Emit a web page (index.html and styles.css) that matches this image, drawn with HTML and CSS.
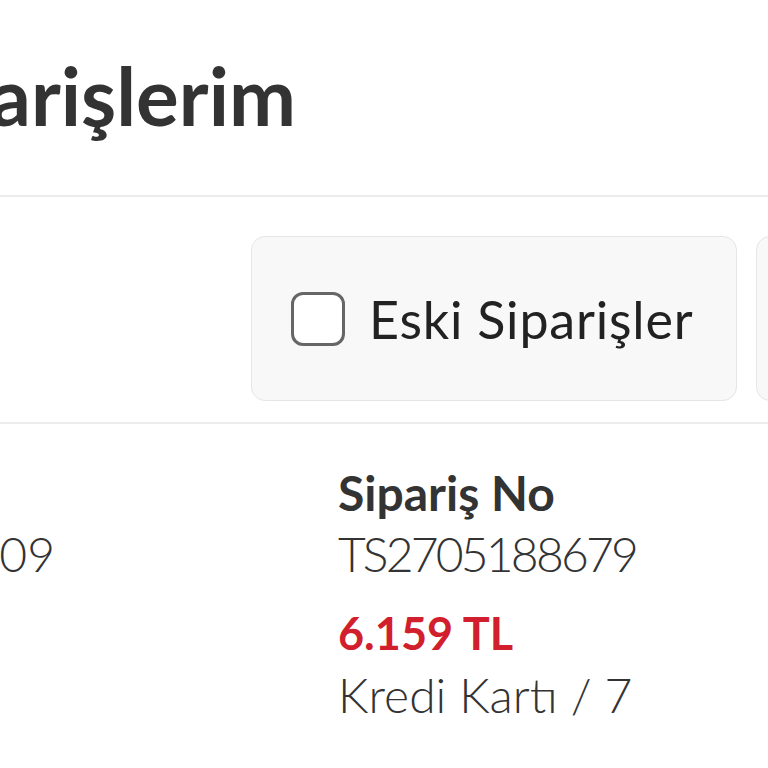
FILE: index.html
```html
<!DOCTYPE html>
<html lang="tr">
<head>
    <meta charset="UTF-8">
    <meta name="viewport" content="width=device-width, initial-scale=1.0">
    <title>Siparişlerim</title>
    <link rel="stylesheet" href="styles.css">
</head>
<body>
    <div class="page-header">
        <div class="title-wrap">
            <h1 class="page-title">Siparişlerim</h1>
        </div>
    </div>

    <div class="filter-bar">
        <label class="filter-card">
            <span class="check-box"></span>
            <span class="filter-label">Eski Siparişler</span>
        </label>
        <label class="filter-card">
            <span class="check-box"></span>
            <span class="filter-label">İptal Edilenler</span>
        </label>
    </div>

    <div class="order-row">
        <div class="order-col order-col-left">
            <div class="order-line">&nbsp;</div>
            <div class="date-wrap">
                <div class="order-line light">27.05.2023 - 15:09</div>
            </div>
        </div>
        <div class="order-col">
            <div class="order-line strong">Sipariş No</div>
            <div class="order-line light order-no">TS2705188679</div>
            <div class="order-price">6.159 TL</div>
            <div class="order-line light">Kredi Kartı / 7</div>
        </div>
    </div>
</body>
</html>
```

FILE: styles.css
```css
* {
    margin: 0;
    padding: 0;
    box-sizing: border-box;
}
html, body {
    width: 768px;
    height: 768px;
    overflow: hidden;
    background: #ffffff;
    font-family: Lato, "Noto Sans", sans-serif;
    color: #333333;
}
/* Header with page title */
.page-header {
    height: 197px;
    padding-top: 47px;
    border-bottom: 2px solid #ececec;
}
.title-wrap {
    width: 296px;
    display: flex;
    justify-content: flex-end;
    white-space: nowrap;
}
.page-title {
    font-size: 80px;
    line-height: 96px;
    font-weight: 700;
    color: #333333;
}
/* Filter cards */
.filter-bar {
    display: flex;
    gap: 19px;
    padding: 39px 0 21px 251px;
    border-bottom: 2px solid #ececec;
    white-space: nowrap;
}
.filter-card {
    flex: 0 0 486px;
    height: 165px;
    display: flex;
    align-items: center;
    gap: 24px;
    padding-left: 39px;
    background: #f8f8f9;
    border: 1px solid #e6e6e8;
    border-radius: 14px;
}
.check-box {
    width: 54px;
    height: 54px;
    flex: 0 0 54px;
    border: 3px solid #666666;
    border-radius: 12px;
    background: #ffffff;
}
.filter-label {
    font-size: 52px;
    font-weight: 400;
    letter-spacing: 0.8px;
    color: #222222;
}
/* Order summary */
.order-row {
    display: flex;
    padding-top: 38px;
}
.order-col {
    display: flex;
    flex-direction: column;
    white-space: nowrap;
}
.order-col-left {
    width: 338px;
}
.date-wrap {
    width: 55px;
    display: flex;
    justify-content: flex-end;
}
.order-line {
    font-size: 48px;
    line-height: 61px;
}
.strong {
    font-weight: 700;
}
.light {
    font-weight: 300;
}
.order-no {
    letter-spacing: -2.8px;
}
.order-price {
    font-size: 45px;
    line-height: 61px;
    font-weight: 700;
    color: #d21f2e;
    margin-top: 19px;
}
```
